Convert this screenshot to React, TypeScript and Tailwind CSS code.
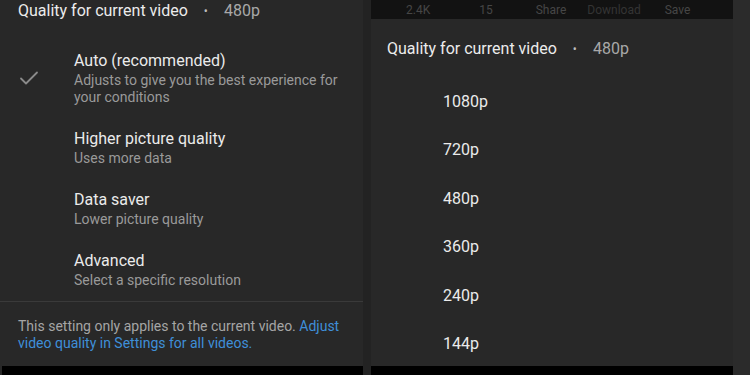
import React from 'react';

const options = [
  { title: 'Auto (recommended)', sub: ['Adjusts to give you the best experience for', 'your conditions'], checked: true },
  { title: 'Higher picture quality', sub: ['Uses more data'] },
  { title: 'Data saver', sub: ['Lower picture quality'] },
  { title: 'Advanced', sub: ['Select a specific resolution'] },
];

const resolutions = ['1080p', '720p', '480p', '360p', '240p', '144p'];

function CheckMark() {
  return (
    <svg width="20" height="16" viewBox="0 0 20 16" fill="none">
      <path d="M2 8.5 L7 13.5 L18 2.5" stroke="#8a8a8a" strokeWidth="1.8" strokeLinecap="round" strokeLinejoin="round" />
    </svg>
  );
}

function Heading() {
  return (
    <div className="flex items-center text-[16px] leading-[22px]">
      <span className="text-[#ececec]">Quality for current video</span>
      <span className="ml-[16px] mr-[16px] text-[#bdbdbd] text-[12px]">•</span>
      <span className="text-[#a8a8a8]">480p</span>
    </div>
  );
}

export default function App() {
  return (
    <div className="flex w-[750px] h-[375px] overflow-hidden bg-[#262626]" style={{ fontFamily: 'Roboto, "Noto Sans", sans-serif' }}>
      {/* left sheet */}
      <div className="flex flex-col w-[363px] h-full bg-[#282828]">
        <div className="pl-[18px] pt-0 h-[50px]">
          <Heading />
        </div>
        <div className="flex flex-col gap-[22px]">
          {options.map((o) => (
            <div key={o.title} className="flex items-center">
              <div className="w-[74px] pl-[19px] flex items-center">
                {o.checked && <CheckMark />}
              </div>
              <div className="flex flex-col">
                <span className="text-[16px] leading-[22px] text-[#ebebeb]">{o.title}</span>
                {o.sub.map((s) => (
                  <span key={s} className="text-[14px] leading-[17px] text-[#9a9a9a]">{s}</span>
                ))}
              </div>
            </div>
          ))}
        </div>
        <div className="mt-[12px] border-t border-[#3a3a3a]" />
        <div className="flex flex-col pl-[18px] pt-[16px] text-[14px] leading-[17px]">
          <span className="text-[#a5a5a5]">
            This setting only applies to the current video. <span className="text-[#3f8fd8]">Adjust</span>
          </span>
          <span className="text-[#3f8fd8]">video quality in Settings for all videos.</span>
        </div>
        <div className="mt-auto h-[9px] ml-[2px] bg-black" />
      </div>

      {/* gap */}
      <div className="w-[8px] h-full bg-[#232323]" />

      {/* right sheet */}
      <div className="flex flex-col w-[362px] h-full bg-[#282828]">
        <div className="h-[19px] bg-[#121212] flex items-center text-[12px] text-[#464646]">
          <span className="ml-[35px]">2.4K</span>
          <span className="ml-[49px]">15</span>
          <span className="ml-[43px]">Share</span>
          <span className="ml-[21px] text-[#343434]">Download</span>
          <span className="ml-[24px]">Save</span>
        </div>
        <div className="pl-[16px] pt-[19px]">
          <Heading />
        </div>
        <div className="flex flex-col pl-[72px] pt-[31px] gap-[26.4px]">
          {resolutions.map((r) => (
            <span key={r} className="text-[16px] leading-[22px] text-[#ebebeb]">{r}</span>
          ))}
        </div>
        <div className="mt-auto h-[9px] bg-black" />
      </div>

      {/* right edge */}
      <div className="flex-1 h-full bg-[#2b2b2b]" />
    </div>
  );
}
